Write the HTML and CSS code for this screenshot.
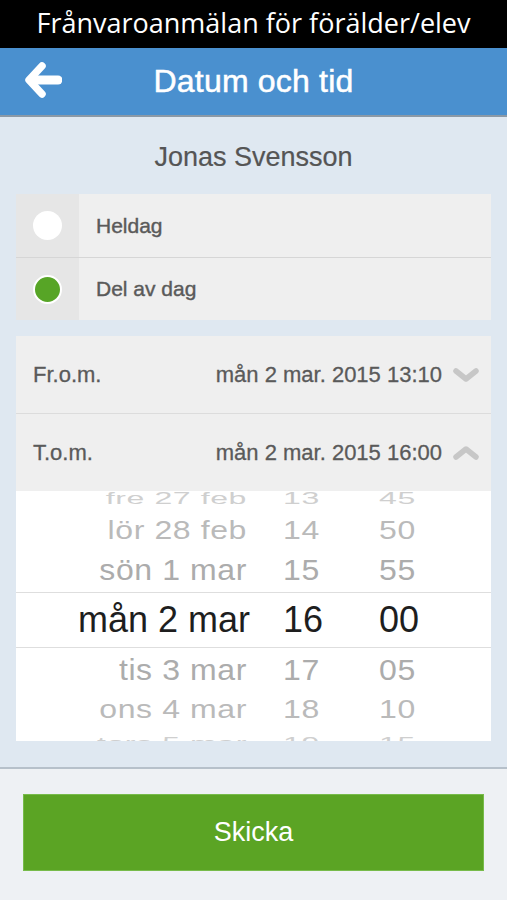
FILE: index.html
```html
<!DOCTYPE html>
<html lang="sv">
<head>
  <meta charset="UTF-8" />
  <meta name="viewport" content="width=device-width, initial-scale=1.0"/>
  <title>Frånvaroanmälan</title>
  <link rel="stylesheet" href="styles.css">
</head>
<body>
  <div class="app">
    <!-- Caption -->
    <div class="caption">Frånvaroanmälan för förälder/elev</div>

    <!-- Nav bar -->
    <div class="navbar">
      <span class="back-btn">
        <svg width="38" height="38" viewBox="0 0 38 38">
          <path d="M18 5 L5 19 L18 33" fill="none" stroke="#fff" stroke-width="7.5" stroke-linecap="round" stroke-linejoin="round"/>
          <path d="M8 19 H34" fill="none" stroke="#fff" stroke-width="9" stroke-linecap="round"/>
        </svg>
      </span>
      <h1>Datum och tid</h1>
    </div>

    <!-- Content -->
    <div class="content">
      <div class="student-name">Jonas Svensson</div>

      <div class="card">
        <div class="radio-row">
          <div class="radio-cell"><span class="radio"></span></div>
          <div class="radio-label">Heldag</div>
        </div>
        <div class="radio-row">
          <div class="radio-cell"><span class="radio checked"></span></div>
          <div class="radio-label">Del av dag</div>
        </div>
      </div>

      <div class="card">
        <div class="date-row">
          <span class="date-label">Fr.o.m.</span>
          <span class="date-value">mån 2 mar. 2015 13:10</span>
          <svg class="chevron" width="28" height="18" viewBox="0 0 28 18">
            <polyline points="4,5 14,13 24,5" fill="none" stroke="#c7c7c7" stroke-width="5.5" stroke-linecap="round" stroke-linejoin="round"/>
          </svg>
        </div>
        <div class="date-row">
          <span class="date-label">T.o.m.</span>
          <span class="date-value">mån 2 mar. 2015 16:00</span>
          <svg class="chevron" width="28" height="18" viewBox="0 0 28 18">
            <polyline points="4,13 14,5 24,13" fill="none" stroke="#c7c7c7" stroke-width="5.5" stroke-linecap="round" stroke-linejoin="round"/>
          </svg>
        </div>

        <!-- Wheel picker -->
        <div class="wheel">
          <div class="wheel-row far top">
            <span class="w-date">fre 27 feb</span><span class="w-hour">13</span><span class="w-min">45</span>
          </div>
          <div class="wheel-row near2">
            <span class="w-date">lör 28 feb</span><span class="w-hour">14</span><span class="w-min">50</span>
          </div>
          <div class="wheel-row near1">
            <span class="w-date">sön 1 mar</span><span class="w-hour">15</span><span class="w-min">55</span>
          </div>
          <div class="wheel-row selected">
            <span class="w-date">mån 2 mar</span><span class="w-hour">16</span><span class="w-min">00</span>
          </div>
          <div class="wheel-row near1">
            <span class="w-date">tis 3 mar</span><span class="w-hour">17</span><span class="w-min">05</span>
          </div>
          <div class="wheel-row near2">
            <span class="w-date">ons 4 mar</span><span class="w-hour">18</span><span class="w-min">10</span>
          </div>
          <div class="wheel-row far">
            <span class="w-date">tors 5 mar</span><span class="w-hour">19</span><span class="w-min">15</span>
          </div>
        </div>
      </div>
    </div>

    <!-- Footer -->
    <div class="footer">
      <button class="send-btn">Skicka</button>
    </div>
  </div>
</body>
</html>
```

FILE: styles.css
```css
body {
  margin: 0;
  font-family: 'Liberation Sans', Arial, sans-serif;
  background-color: #eef1f4;
}
.app {
  width: 507px;
  height: 900px;
  display: flex;
  flex-direction: column;
  overflow: hidden;
}

.caption {
  height: 48px;
  background-color: #000;
  color: #fff;
  font-family: 'Open Sans', sans-serif;
  font-size: 27px;
  line-height: 46px;
  text-align: center;
}

.navbar {
  position: relative;
  height: 67px;
  background-color: #4a90cf;
  border-bottom: 2px solid #8b99a6;
  display: flex;
  align-items: center;
  justify-content: center;
}
.navbar h1 {
  margin: 0;
  color: #fff;
  font-size: 32px;
  font-weight: normal;
  letter-spacing: 0.2px;
  -webkit-text-stroke: 0.5px #fff;
}
.back-btn {
  position: absolute;
  left: 24px;
  top: 13px;
  display: flex;
}

.content {
  flex: 0 0 650px;
  box-sizing: border-box;
  background-color: #dfe8f1;
  padding: 0 16px;
  display: flex;
  flex-direction: column;
  gap: 16px;
}

.student-name {
  height: 61px;
  padding-top: 16px;
  box-sizing: border-box;
  text-align: center;
  color: #555;
  font-size: 27px;
  line-height: 48px;
  -webkit-text-stroke: 0.2px #555;
}

.card {
  background-color: #efefef;
  display: flex;
  flex-direction: column;
}

.radio-row {
  display: flex;
  height: 63px;
}
.radio-row + .radio-row {
  border-top: 1px solid #d6d6d6;
  height: 62px;
}
.radio-cell {
  width: 63px;
  background-color: #e6e6e6;
  display: flex;
  align-items: center;
  justify-content: center;
}
.radio {
  width: 29px;
  height: 29px;
  border-radius: 50%;
  background-color: #fff;
  box-sizing: border-box;
}
.radio.checked {
  background-color: #57a526;
  border: 2px solid #fff;
}
.radio-label {
  padding-left: 17px;
  display: flex;
  align-items: center;
  color: #5a5a5a;
  font-size: 21px;
  -webkit-text-stroke: 0.4px #5a5a5a;
}

.date-row {
  height: 77px;
  display: flex;
  align-items: center;
  padding: 0 11px 0 17px;
  color: #5a5a5a;
  font-size: 22px;
  -webkit-text-stroke: 0.3px #5a5a5a;
}
.date-row + .date-row {
  border-top: 1px solid #dcdcdc;
}
.date-label {
  flex: 1;
}
.date-value {
  margin-right: 10px;
}
.chevron {
  display: block;
}

.wheel {
  height: 250px;
  background-color: #fff;
  overflow: hidden;
  display: flex;
  flex-direction: column;
}
.wheel-row {
  flex: none;
  display: grid;
  grid-template-columns: 231px 132px 1fr;
  align-items: center;
  font-size: 32px;
  color: #b2b2b2;
  letter-spacing: 0.6px;
}
.w-date {
  text-align: right;
}
.w-hour {
  padding-left: 36px;
}
.wheel-row.far {
  height: 30px;
  color: #cfcfcf;
  transform: scaleY(0.5);
}
.wheel-row.far.top {
  margin-top: -9px;
}
.wheel-row.near2 {
  height: 37px;
  transform: scaleY(0.78);
  color: #bababa;
}
.wheel-row.near1 {
  height: 43px;
  transform: scaleY(0.93);
  color: #acacac;
}
.wheel-row.selected {
  height: 54px;
  grid-template-columns: 234px 129px 1fr;
  font-size: 36px;
  letter-spacing: 0;
  color: #1e1e1e;
  border-top: 1px solid #dedede;
  border-bottom: 1px solid #dedede;
}
.wheel-row.selected .w-hour {
  padding-left: 33px;
}
.wheel-row.selected + .near1 {
  height: 44px;
}
.wheel-row.selected + .near1 + .near2 {
  height: 35px;
}

.footer {
  flex: 1;
  border-top: 2px solid #b6c0ca;
  background-color: #eef1f4;
  padding: 25px 23px 0;
}
.send-btn {
  display: block;
  width: 461px;
  height: 77px;
  border: 1px solid #77bb4a;
  background-color: #5ba424;
  color: #fff;
  font-family: 'Liberation Sans', Arial, sans-serif;
  font-size: 27px;
  cursor: pointer;
}
```
